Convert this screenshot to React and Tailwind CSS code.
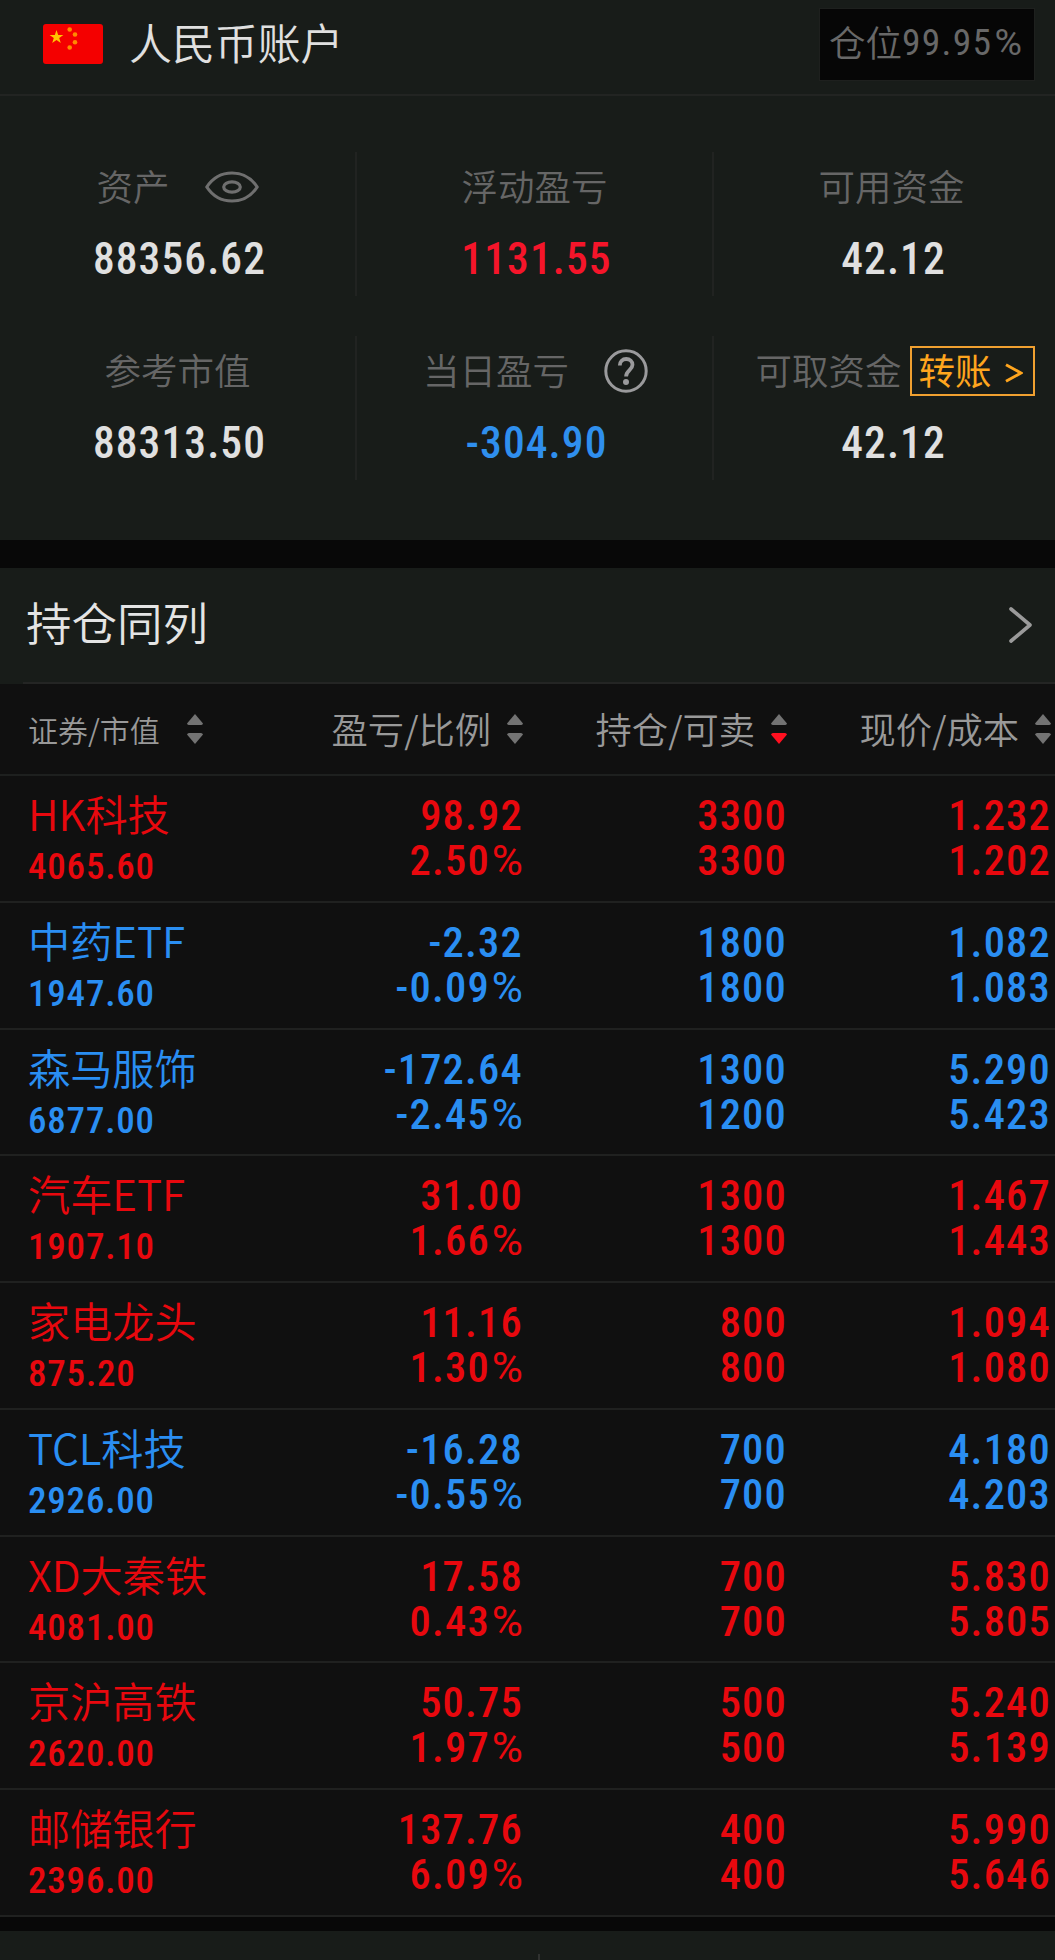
import clsx from 'clsx';

const holdings = [
    { name: 'HK科技', value: '4065.60', profit: '98.92', ratio: '2.50', amount: '3300', sellable: '3300', price: '1.232', cost: '1.202' },
    { name: '中药ETF', value: '1947.60', profit: '-2.32', ratio: '-0.09', amount: '1800', sellable: '1800', price: '1.082', cost: '1.083' },
    { name: '森马服饰', value: '6877.00', profit: '-172.64', ratio: '-2.45', amount: '1300', sellable: '1200', price: '5.290', cost: '5.423' },
    { name: '汽车ETF', value: '1907.10', profit: '31.00', ratio: '1.66', amount: '1300', sellable: '1300', price: '1.467', cost: '1.443' },
    { name: '家电龙头', value: '875.20', profit: '11.16', ratio: '1.30', amount: '800', sellable: '800', price: '1.094', cost: '1.080' },
    { name: 'TCL科技', value: '2926.00', profit: '-16.28', ratio: '-0.55', amount: '700', sellable: '700', price: '4.180', cost: '4.203' },
    { name: 'XD大秦铁', value: '4081.00', profit: '17.58', ratio: '0.43', amount: '700', sellable: '700', price: '5.830', cost: '5.805' },
    { name: '京沪高铁', value: '2620.00', profit: '50.75', ratio: '1.97', amount: '500', sellable: '500', price: '5.240', cost: '5.139' },
    { name: '邮储银行', value: '2396.00', profit: '137.76', ratio: '6.09', amount: '400', sellable: '400', price: '5.990', cost: '5.646' },
];

const Flag = () => (
    <svg className="h-10 w-[60px]" viewBox="0 0 60 40">
        <rect width="60" height="40" rx="3" fill="#f40000" />
        <path d="M13.500 6l1.700 4.900h5.200l-4.200 3.100 1.600 5-4.300-3-4.300 3 1.600-5-4.200-3.100h5.200z" fill="#ffc400" />
        <g fill="#ff8a00">
            <circle cx="26.7" cy="5.5" r="2.3" />
            <circle cx="32" cy="10.5" r="2.3" />
            <circle cx="32" cy="18.3" r="2.3" />
            <circle cx="26.7" cy="23.5" r="2.3" />
        </g>
    </svg>
);

const Eye = () => (
    <svg className="mt-[2px] ml-[35px] h-8 w-[54px]" viewBox="0 0 54 32" fill="none" stroke="#6f6f6f" strokeWidth="3.2">
        <path d="M1.800 16C8 6.500 17 2 27 2s19 4.500 25.200 14C46 25.500 37 30 27 30S8 25.500 1.800 16z" strokeLinejoin="round" />
        <ellipse cx="27" cy="16" rx="8.3" ry="5.2" />
    </svg>
);

const Help = () => (
    <svg className="mt-[2px] mr-[-2px] ml-[35px] h-11 w-11" viewBox="0 0 44 44" fill="none" stroke="#9a9a9c">
        <circle cx="22" cy="22" r="20.2" strokeWidth="3" />
        <path d="M15.800 16.500c0-4 2.700-6.500 6.400-6.500s6.300 2.400 6.300 5.800c0 5.200-6.400 5.600-6.400 11.700" strokeWidth="3.8" />
        <circle cx="22" cy="33" r="3" fill="#9a9a9c" stroke="none" />
    </svg>
);

const SortIcon = ({ desc, className }) => (
    <svg className={clsx('h-[30px] w-4 shrink-0', className)} viewBox="0 0 16 30">
        <path d="M8 0L16 9.500Q15.500 11 14 11H2Q.500 11 0 9.500z" fill="#737373" />
        <path d="M8 30L16 20.500Q15.500 19 14 19H2Q.500 19 0 20.500z" fill={desc ? '#ff1020' : '#737373'} />
    </svg>
);

const Percent = () => <span className="ml-[2px] font-normal tracking-normal [font-stretch:100%]">%</span>;

const Stat = ({ label, value, color = 'text-[#e0e0e0]', divider, children }) => (
    <div className={clsx('flex h-36 flex-col items-center border-r-2', divider ? 'border-[#212321]' : 'border-transparent')}>
        <div className="mt-[6px] flex h-14 items-center whitespace-nowrap text-[36.5px] font-[350] text-[#666]">
            <span>{label}</span>
            {children}
        </div>
        <div className={clsx('mt-[18px] ml-1 font-[Roboto] text-[43.5px] leading-[56px] font-medium tracking-[1.1px] [font-stretch:75%]', color)}>{value}</div>
    </div>
);

const Pair = ({ top, bottom }) => (
    <div className="pt-[17px] text-right font-[Roboto] text-[42.5px] leading-[45px] font-medium tracking-[1.2px] [font-stretch:75%]">
        <p>{top}</p>
        <p>{bottom}</p>
    </div>
);

const App = () => {
    return (
        <div className="h-[1960px] w-[1055px] overflow-hidden bg-[#080808] font-['Noto_Sans_CJK_SC',sans-serif]">
            <div className="h-[540px] bg-[#181c19]">
                <div className="flex h-24 items-start border-b-2 border-[#222422] pl-[43px]">
                    <div className="mt-6"><Flag /></div>
                    <h1 className="mt-[14px] ml-[26px] text-[42.9px] leading-[54px] font-[350] text-[#e0e0e0]">人民币账户</h1>
                    <div className="mt-2 mr-[20px] ml-auto flex h-[73px] w-[216px] items-center border border-[#1e201e] bg-[#060606] pb-1 pl-[9px] text-[36.5px] font-[350] whitespace-nowrap text-[#686868]">
                        仓位<span className="font-[Roboto] text-[37.5px] font-normal tracking-[1.3px] [font-stretch:75%]">99.95<Percent /></span>
                    </div>
                </div>
                <div className="grid grid-cols-[357px_357px_357px] gap-y-10 pt-14">
                    <Stat label="资产" value="88356.62" divider><Eye /></Stat>
                    <Stat label="浮动盈亏" value="1131.55" color="text-[#f5152a]" divider />
                    <Stat label="可用资金" value="42.12" />
                    <Stat label="参考市值" value="88313.50" divider />
                    <Stat label="当日盈亏" value="-304.90" color="text-[#2f8fee]" divider><Help /></Stat>
                    <Stat label="可取资金" value="42.12">
                        <button className="mt-[2px] mr-[-7px] ml-2 flex h-[50px] w-[125px] items-center border-2 border-[#f0a030] pb-[2px] pl-[7px] text-[36.5px] font-normal text-[#ffa51e]">
                            转账
                            <svg className="mt-[6px] ml-[13px] h-5 w-[18px]" viewBox="0 0 18 20" fill="none" stroke="#ffa51e" strokeWidth="3">
                                <path d="M1 1.800L16 10L1 18.200" />
                            </svg>
                        </button>
                    </Stat>
                </div>
            </div>

            <div className="mt-7 flex h-[116px] flex-col bg-[#181c19]">
                <div className="flex flex-1 items-center justify-between pr-[23px] pb-1 pl-[26px]">
                    <h2 className="-mt-[3px] text-[45.5px] font-[350] text-[#e4e4e4]">持仓同列</h2>
                    <svg className="mt-[3px] h-9 w-[23px]" viewBox="0 0 23 36" fill="none" stroke="#9a9a9a" strokeWidth="3.6" strokeLinecap="round" strokeLinejoin="round">
                        <path d="M2 2L21 18L2 34" />
                    </svg>
                </div>
                <div className="ml-[23px] h-0.5 bg-[#242524]" />
            </div>

            <div className="bg-[#101010]">
                <div className="flex h-[92px] items-center border-b-2 border-[#1e201f] text-[36.3px] font-[350] whitespace-nowrap text-[#999]">
                    <div className="flex w-[258px] items-center pl-7">
                        <span className="text-[30px]">证券/市值</span>
                        <SortIcon className="ml-[27px]" />
                    </div>
                    <div className="flex w-[265px] items-center justify-end"><span className="-mt-[2px]">盈亏/比例</span><SortIcon className="ml-4" /></div>
                    <div className="flex w-[264px] items-center justify-end"><span className="-mt-[2px]">持仓/可卖</span><SortIcon desc className="ml-4" /></div>
                    <div className="flex w-[264px] items-center justify-end"><span className="-mt-[2px]">现价/成本</span><SortIcon className="ml-4" /></div>
                </div>
                {holdings.map((item) => (
                    <div
                        key={item.name}
                        className={clsx(
                            'grid h-[126.75px] grid-cols-[258px_265px_264px_264px] border-b-2 border-[#202120]',
                            item.profit.startsWith('-') ? 'text-[#2a8ef2]' : 'text-[#e8080e]'
                        )}
                    >
                        <div className="pt-[10px] pl-7 whitespace-nowrap">
                            <p className="text-[42.2px] leading-[54px] font-[350]">{item.name}</p>
                            <p className="pt-[5px] font-[Roboto] text-[37px] leading-[44px] font-medium tracking-[0.8px] [font-stretch:75%]">{item.value}</p>
                        </div>
                        <Pair top={item.profit} bottom={<>{item.ratio}<Percent /></>} />
                        <Pair top={item.amount} bottom={item.sellable} />
                        <Pair top={item.price} bottom={item.cost} />
                    </div>
                ))}
            </div>

            <div className="mt-3.5 h-[30px] bg-[#181c19] pt-[23px] pl-[538px]">
                <div className="h-2 w-0.5 bg-[#303230]" />
            </div>
        </div>
    );
};

export default App;
